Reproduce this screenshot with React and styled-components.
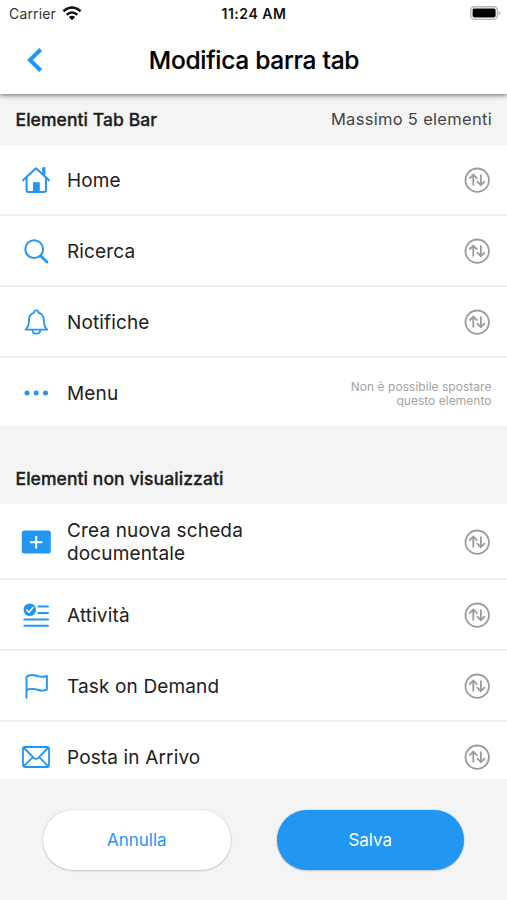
import React from 'react';
import styled, { createGlobalStyle } from 'styled-components';

const BLUE = '#2196f3';

const GlobalStyle = createGlobalStyle`
  * { box-sizing: border-box; }
  body { margin: 0; background: #f4f4f4; overflow: hidden; }
  button { font: inherit; border: 0; padding: 0; background: none; }
`;

const Screen = styled.div`
  width: 507px;
  height: 900px;
  display: flex;
  flex-direction: column;
  background: #f4f4f4;
  color: #202020;
  font-family: Inter, "Liberation Sans", sans-serif;
  white-space: nowrap;
  overflow: hidden;
`;

const Header = styled.header`
  position: relative;
  z-index: 1;
  flex: none;
  height: 94px;
  background: #fff;
  box-shadow: 0 1px 5px rgba(0, 0, 0, 0.58);
`;

const StatusBar = styled.div`
  display: grid;
  grid-template-columns: 1fr auto 1fr;
  align-items: center;
  height: 27px;
  padding: 0 6px 0 9px;
  color: #111;
`;

const Carrier = styled.div`
  display: flex;
  align-items: center;
  gap: 6px;
  font-size: 14px;
  letter-spacing: 0.15px;
  color: #333;
`;

const Clock = styled.div`
  margin-left: -2px;
  font-size: 14px;
  font-weight: 600;
  letter-spacing: 0.55px;
`;

const Battery = styled.svg`
  justify-self: end;
  width: 31px;
  height: 15px;
`;

const TitleBar = styled.div`
  display: grid;
  grid-template-columns: 60px 1fr 60px;
  align-items: center;
  height: 66px;
`;

const BackButton = styled.button`
  display: flex;
  padding-left: 26px;
`;

const Title = styled.h1`
  margin: 0;
  padding-left: 1px;
  text-align: center;
  font-size: 24.5px;
  line-height: 30px;
  font-weight: 500;
  letter-spacing: -0.27px;
  color: #000;
  -webkit-text-stroke: 0.2px #000;
`;

const List = styled.main`
  flex: none;
  height: 685px;
  overflow: hidden;
`;

const SectionHeader = styled.div`
  display: flex;
  justify-content: space-between;
  align-items: flex-end;
  height: ${(p) => p.$height}px;
  padding: 0 15px 15px 15.5px;
  line-height: 21px;
`;

const SectionTitle = styled.h2`
  margin: 0;
  font-size: 17.5px;
  font-weight: 500;
  letter-spacing: 0.08px;
  -webkit-text-stroke: 0.3px #202020;
`;

const SectionNote = styled.span`
  font-size: 16.5px;
  letter-spacing: 0.3px;
  color: #444;
`;

const Row = styled.div`
  display: flex;
  align-items: center;
  height: ${(p) => (p.$tall ? 76 : 71)}px;
  padding: ${(p) => (p.$fixed ? 2 : 1)}px 16px 0 21px;
  background: #fff;
  border-bottom: ${(p) => (p.$fixed ? '3px solid #f3f3f3' : '2px solid #f0f0f0')};
`;

const Icon = styled.svg`
  flex: none;
  width: 30px;
  height: 30px;
  fill: none;
  stroke: ${BLUE};
  stroke-width: 2;
  stroke-linecap: round;
  stroke-linejoin: round;
`;

const Label = styled.div`
  flex: 1;
  margin-left: 16px;
  padding-top: 1px;
  font-size: 19px;
  line-height: 23px;
  letter-spacing: 0.14px;
`;

const Hint = styled.div`
  padding-top: 2px;
  margin-right: -0.5px;
  text-align: right;
  font-size: 12px;
  line-height: 14.5px;
  letter-spacing: 0.03px;
  color: #a3a3a3;
`;

const Handle = styled.svg`
  flex: none;
  width: 28px;
  height: 28px;
  fill: none;
  stroke: #9b9b9b;
  stroke-width: 1.8;
`;

const Footer = styled.footer`
  flex: 1;
  display: flex;
  align-items: flex-start;
  gap: 46px;
  padding: 30.5px 43px 0;
`;

const PillButton = styled.button`
  flex: 1;
  height: 60px;
  border-radius: 30px;
  font-size: 17px;
  letter-spacing: 0;
  color: ${(p) => (p.$primary ? '#fff' : BLUE)};
  background: ${(p) => (p.$primary ? BLUE : '#fff')};
  box-shadow: 0 0.5px 2px rgba(0, 0, 0, 0.32);
`;

const icons = {
  home: (
    <>
      <path d="M2 15.2 15 3.2 28 15.2" />
      <path d="M5.5 13V25q0 2 2 2H23q2 0 2-2V13" />
      <path d="M22.8 2.2V10" strokeWidth="3.2" strokeLinecap="butt" />
      <path d="M12 17.2h6.8V27H12z" fill={BLUE} stroke="none" />
    </>
  ),
  search: (
    <>
      <circle cx="13.2" cy="13.2" r="8.9" />
      <path d="M19.9 20 26 26" strokeWidth="2.8" />
    </>
  ),
  bell: (
    <g strokeWidth="1.8">
      <path d="M4.6 22.7Q8 19.6 8 12.8C8 8.8 10.4 6.5 13 5.6 13.2 2.7 17.4 2.7 17.6 5.6 20.4 6.5 22.8 8.8 22.8 12.8Q22.8 19.6 26.2 22.7Z" />
      <path d="M11.5 23C11.7 27.9 19.1 27.9 19.3 23" />
    </g>
  ),
  dots: (
    <g fill={BLUE} stroke="none">
      <circle cx="6" cy="15" r="2.5" />
      <circle cx="15.2" cy="15" r="2.5" />
      <circle cx="24.5" cy="15" r="2.5" />
    </g>
  ),
  add: (
    <>
      <rect x="0.8" y="3.5" width="29" height="23" rx="2.5" fill={BLUE} stroke="none" />
      <path d="M15.2 9v12.4M9 15.2h12.4" stroke="#fff" strokeLinecap="butt" />
    </>
  ),
  tasks: (
    <>
      <circle cx="8.8" cy="9.7" r="6.3" fill={BLUE} stroke="none" />
      <path d="m5.8 10 2.2 2.2 4-4.6" stroke="#fff" strokeWidth="1.6" />
      <path d="M17.5 6.5H27M17.5 12.9H27M3.3 19.4H27M3.3 25.7H27" strokeWidth="2" />
    </>
  ),
  flag: (
    <path d="M5.5 27V6C9 2.2 14.5 4.6 17.5 5.4Q22 6.4 25.9 5V18.7Q22 20.3 17.5 19C13 17.7 9 16.6 5.5 19.5" strokeWidth="1.9" />
  ),
  mail: (
    <g strokeWidth="1.8">
      <rect x="2" y="5" width="26" height="20" rx="1.8" />
      <path d="m3 6 9.5 9.7q2.5 2.4 5 0L27 6M3 24l8.8-8.8M27 24l-8.8-8.8" />
    </g>
  ),
};

const visibleItems = [
  { icon: 'home', label: 'Home' },
  { icon: 'search', label: 'Ricerca' },
  { icon: 'bell', label: 'Notifiche' },
  { icon: 'dots', label: 'Menu', fixed: true },
];

const hiddenItems = [
  { icon: 'add', label: <>Crea nuova scheda<br />documentale</>, tall: true },
  { icon: 'tasks', label: 'Attività' },
  { icon: 'flag', label: 'Task on Demand' },
  { icon: 'mail', label: 'Posta in Arrivo' },
];

function TabItem({ icon, label, fixed, tall }) {
  return (
    <Row $tall={tall} $fixed={fixed}>
      <Icon viewBox="0 0 30 30">{icons[icon]}</Icon>
      <Label>{label}</Label>
      {fixed ? (
        <Hint>Non è possibile spostare<br />questo elemento</Hint>
      ) : (
        <Handle viewBox="0 0 28 28">
          <circle cx="14.2" cy="14.2" r="11.7" />
          <path d="M10.3 19.5V8.7M6.3 12.6l4-4 4 4M17.9 8.5V19.2M13.9 15.2l4 4 4-4" />
        </Handle>
      )}
    </Row>
  );
}

export default function App() {
  return (
    <>
      <GlobalStyle />
      <Screen>
        <Header>
          <StatusBar>
            <Carrier>
              Carrier
              <svg width="20" height="15" viewBox="0 0 18 14" fill="none" stroke="#111" strokeWidth="2.3">
                <path d="M1 4.9Q9-2 17 4.9M4 8.2Q9 3.8 14 8.2" />
                <path d="M9 13.4 6 10.3Q9 7.9 12 10.3Z" fill="#111" stroke="none" />
              </svg>
            </Carrier>
            <Clock>11:24 AM</Clock>
            <Battery viewBox="0 0 31 15">
              <rect x="0.8" y="0.8" width="26.6" height="12.6" rx="3.6" fill="#fff" stroke="#b5b5b5" strokeWidth="1.4" />
              <rect x="2.6" y="2.6" width="23" height="9" rx="1.8" fill="#000" />
              <path d="M28.8 5Q32 7.1 28.8 9.2Z" fill="#aaa" />
            </Battery>
          </StatusBar>
          <TitleBar>
            <BackButton aria-label="Indietro">
              <svg width="18" height="26" viewBox="0 0 18 26" fill="none" stroke={BLUE} strokeWidth="4">
                <path d="M14.7 2.5 4 13l10.7 10.5" />
              </svg>
            </BackButton>
            <Title>Modifica barra tab</Title>
          </TitleBar>
        </Header>
        <List>
          <SectionHeader $height={51}>
            <SectionTitle>Elementi Tab Bar</SectionTitle>
            <SectionNote>Massimo 5 elementi</SectionNote>
          </SectionHeader>
          {visibleItems.map((item) => <TabItem key={item.icon} {...item} />)}
          <SectionHeader $height={75}>
            <SectionTitle>Elementi non visualizzati</SectionTitle>
          </SectionHeader>
          {hiddenItems.map((item) => <TabItem key={item.icon} {...item} />)}
        </List>
        <Footer>
          <PillButton>Annulla</PillButton>
          <PillButton $primary>Salva</PillButton>
        </Footer>
      </Screen>
    </>
  );
}
